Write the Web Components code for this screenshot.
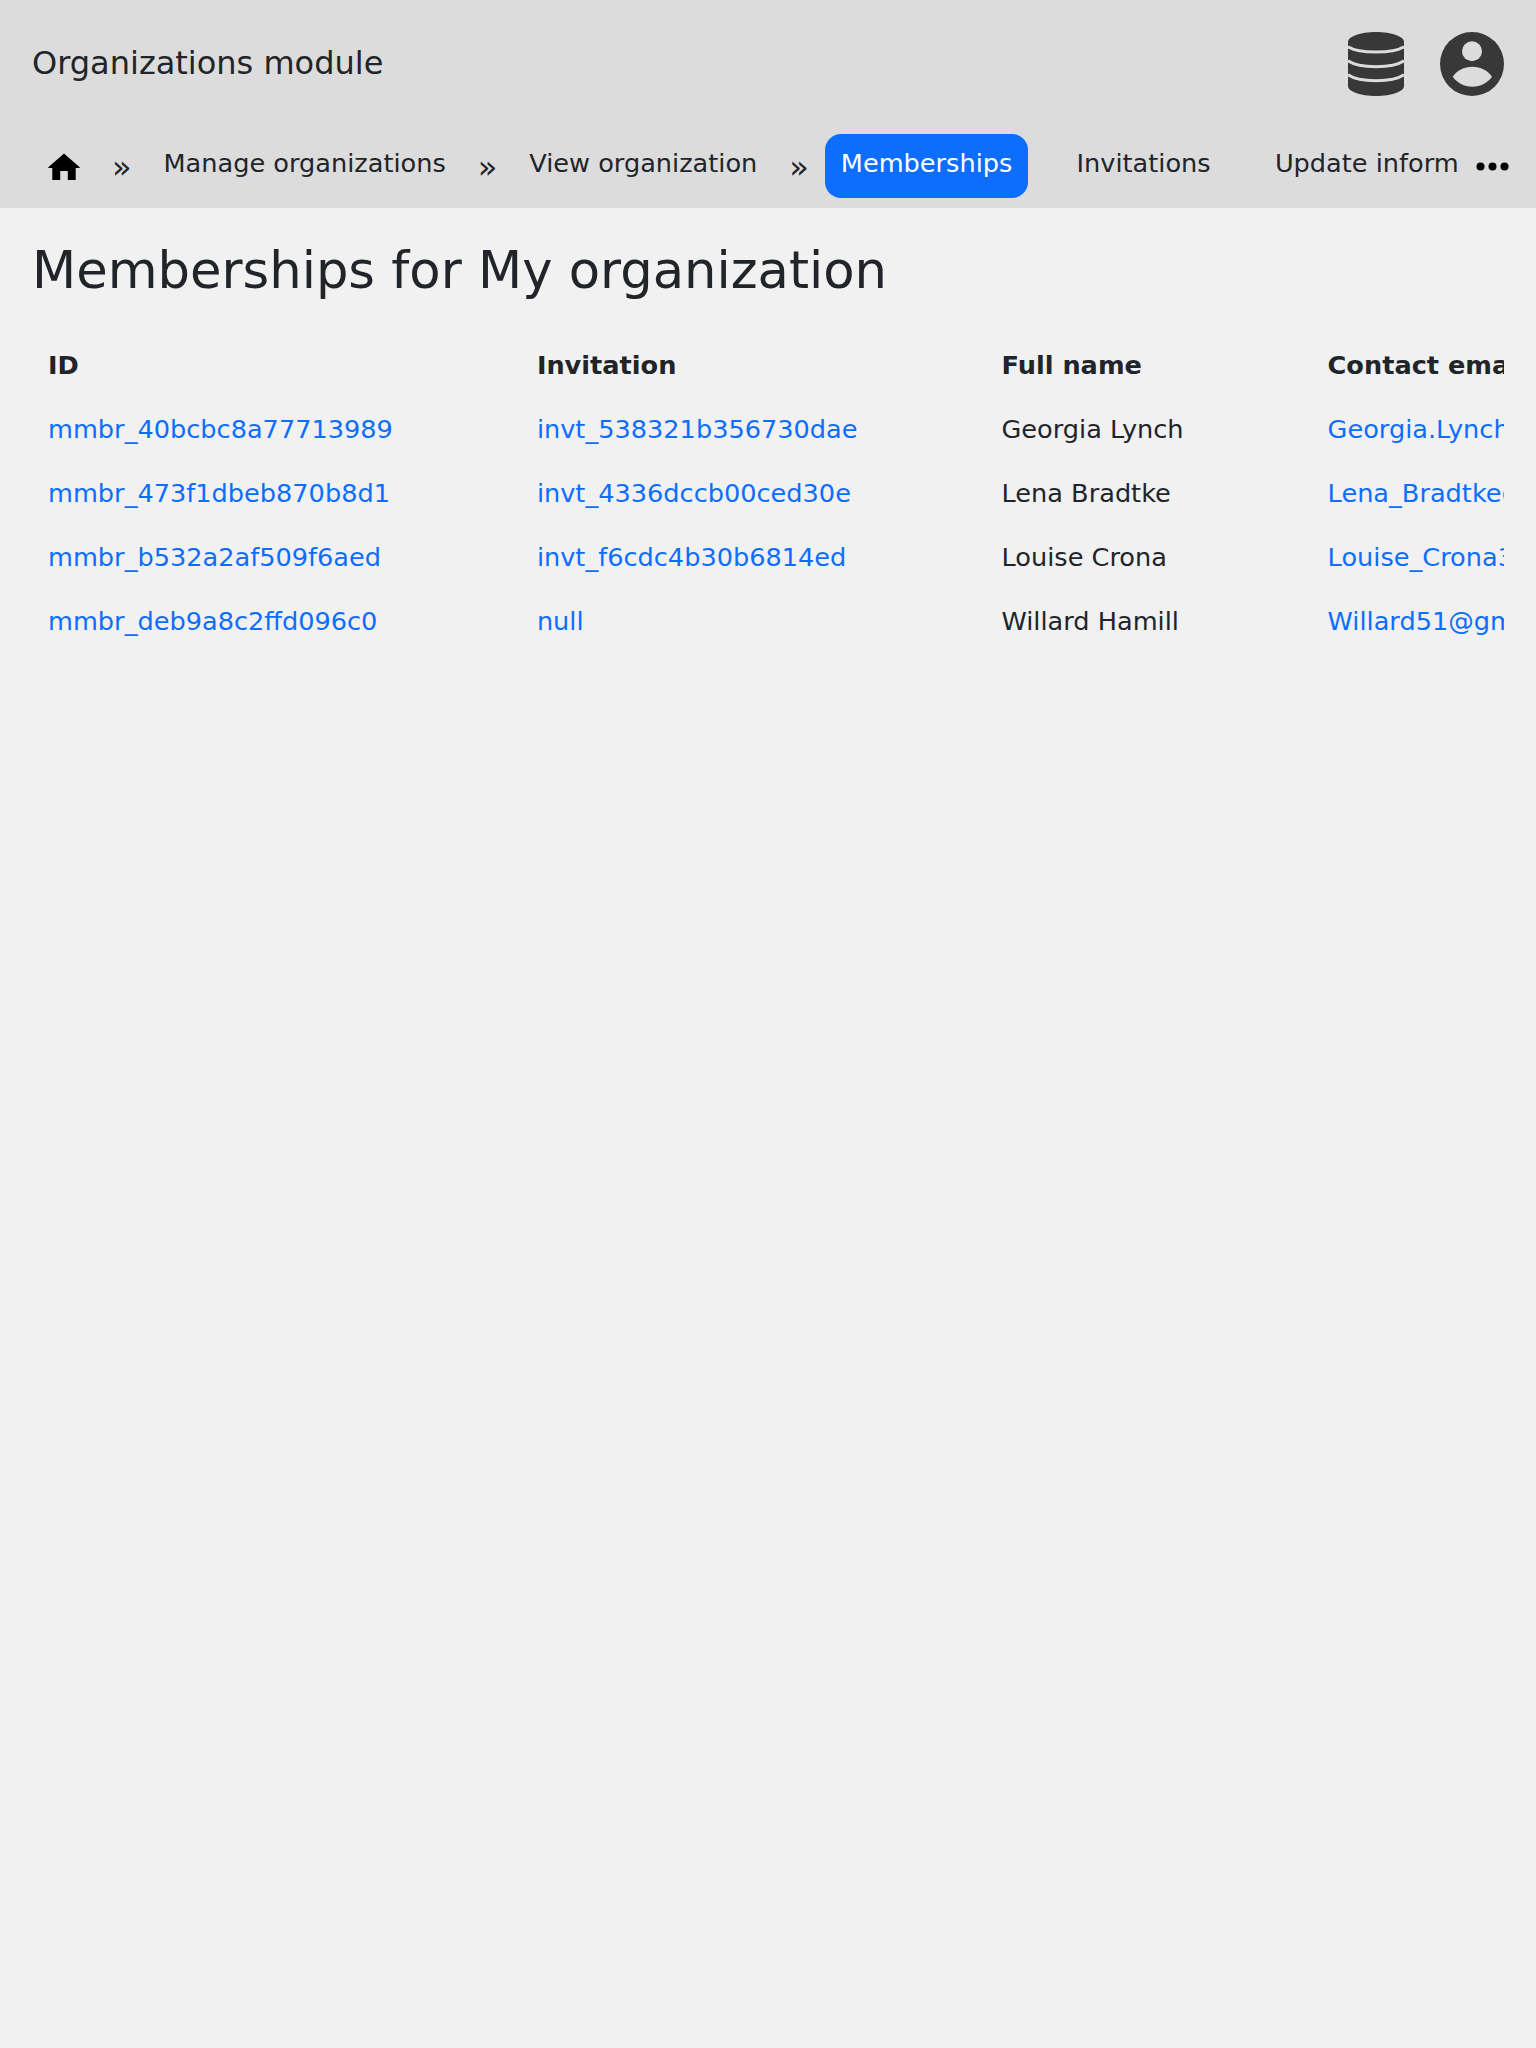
<!DOCTYPE html>
<html>
<head>
<meta charset="utf-8">
<title>Organizations module</title>
<style>
	html, body {
		margin: 0;
		min-height: 100%;
		background-color: #f1f1f1;
		font-family: "DejaVu Sans", sans-serif;
		font-size: 25.6px;
		color: #212529;
	}
</style>
</head>
<body>
<org-app>
	<org-topbar title-text="Organizations module"></org-topbar>
	<org-nav></org-nav>
	<org-page heading="Memberships for My organization"></org-page>
</org-app>

<script>
const linkColor = "#0d6efd";
const textColor = "#212529";
const headerColor = "#dcdcdc";

class orgApp extends HTMLElement {
	constructor() {
		super();
		this.attachShadow({mode: 'open'}).innerHTML = /*html*/`
			<style>
				:host {
					display: flex;
					flex-direction: column;
					min-height: 2048px;
				}
			</style>
			<slot></slot>
		`;
	}
}

class orgTopbar extends HTMLElement {
	constructor() {
		super();
		this.attachShadow({mode: 'open'}).innerHTML = /*html*/`
			<style>
				:host {
					display: flex;
					align-items: center;
					justify-content: space-between;
					height: 128px;
					padding: 0 32px;
					box-sizing: border-box;
					background-color: ${headerColor};
				}
				#title {
					margin-bottom: 2px;
					font-size: 32px;
					color: ${textColor};
				}
				#icons {
					display: flex;
					gap: 36px;
				}
				svg {
					display: block;
					height: 64px;
					fill: #383838;
				}
			</style>
			<span id="title"></span>
			<div id="icons">
				<svg width="56" viewBox="0 0 56 64">
					<path d="M0 10C0 4.500 12.500 0 28 0S56 4.500 56 10V54C56 59.500 43.500 64 28 64S0 59.500 0 54z"/>
					<g fill="none" stroke="${headerColor}" stroke-width="3">
						<path d="M0 14.700C5 18 15 20 28 20S51 18 56 14.700"/>
						<path d="M0 28.700C5 32.500 15 34.700 28 34.700S51 32.500 56 28.700"/>
						<path d="M0 42.700C5 46.500 15 48.700 28 48.700S51 46.500 56 42.700"/>
					</g>
				</svg>
				<svg width="64" viewBox="0 0 64 64">
					<circle cx="32" cy="32" r="32"/>
					<circle cx="32" cy="19.300" r="10" fill="${headerColor}"/>
					<path d="M12.700 44.700C17 38.500 24 34.700 32.300 34.700S47.700 38.500 52 44.700C47.700 50.700 40.500 54.700 32.300 54.700S17 50.700 12.700 44.700z" fill="${headerColor}"/>
				</svg>
			</div>
		`;
	}

	connectedCallback() {
		this.shadowRoot.querySelector('#title').textContent = this.getAttribute('title-text');
	}
}

class orgNav extends HTMLElement {
	constructor() {
		super();
		this.items = [
			{chevron: true, label: 'Manage organizations'},
			{chevron: true, label: 'View organization'},
			{chevron: true, label: 'Memberships', active: true},
			{label: 'Invitations'},
			{label: 'Update information'}
		];
		this.attachShadow({mode: 'open'}).innerHTML = /*html*/`
			<style>
				:host {
					display: flex;
					align-items: center;
					height: 80px;
					padding-left: 48px;
					padding-right: 27.500px;
					box-sizing: border-box;
					background-color: ${headerColor};
				}
				#links {
					display: flex;
					align-items: center;
					flex: 1;
					min-width: 0;
					height: 64px;
					margin-top: -4px;
					overflow: hidden;
					white-space: nowrap;
				}
				#home {
					flex: none;
					width: 32px;
					height: 27px;
					margin-right: 16px;
				}
				.chevron {
					flex: none;
					margin: 2px 16.600px 0 16.600px;
					font-size: 32px;
					line-height: 1;
					color: ${textColor};
				}
				#home + .chevron {
					margin-left: 16px;
				}
				.item {
					flex: none;
					height: 64px;
					line-height: 58px;
					padding: 0 15.360px;
					box-sizing: border-box;
					border-radius: 16px;
					color: ${textColor};
				}
				.item.active {
					background-color: ${linkColor};
					color: #fff;
				}
				.item + .item {
					margin-left: 33.500px;
				}
				#more {
					flex: none;
					display: block;
					margin-left: 17px;
					margin-top: -4px;
				}
			</style>
			<div id="links">
				<svg id="home" viewBox="0 0 32 27"><path d="M16 0.500L32 14.500L31 15H27.700V27H19.800V18H12.200V27H4.300V15H1L0 14.500z"/></svg>
			</div>
			<svg id="more" width="33" height="9" viewBox="0 0 33 9"><circle cx="4.500" cy="4.500" r="4"/><circle cx="16.500" cy="4.500" r="4"/><circle cx="28.500" cy="4.500" r="4"/></svg>
		`;
	}

	connectedCallback() {
		const links = this.shadowRoot.querySelector('#links');
		this.items.forEach(item => {
			if (item.chevron) {
				const chevron = document.createElement('span');
				chevron.setAttribute('class', 'chevron');
				chevron.textContent = '»';
				links.appendChild(chevron);
			}
			const link = document.createElement('span');
			link.setAttribute('class', item.active ? 'item active' : 'item');
			link.textContent = item.label;
			links.appendChild(link);
		});
	}
}

class orgPage extends HTMLElement {
	constructor() {
		super();
		this.rows = [
			['mmbr_40bcbc8a77713989', 'invt_538321b356730dae', 'Georgia Lynch', 'Georgia.Lynch@gmail.com'],
			['mmbr_473f1dbeb870b8d1', 'invt_4336dccb00ced30e', 'Lena Bradtke', 'Lena_Bradtke@hotmail.com'],
			['mmbr_b532a2af509f6aed', 'invt_f6cdc4b30b6814ed', 'Louise Crona', 'Louise_Crona33@yahoo.com'],
			['mmbr_deb9a8c2ffd096c0', 'null', 'Willard Hamill', 'Willard51@gmail.com']
		];
		this.attachShadow({mode: 'open'}).innerHTML = /*html*/`
			<style>
				:host {
					display: block;
					padding: 32px 32px 0;
					color: ${textColor};
				}
				h1 {
					margin: 0 0 32px;
					font-size: 51.200px;
					font-weight: 400;
					line-height: 1.2;
				}
				#scroller {
					overflow: hidden;
				}
				table {
					border-collapse: collapse;
					white-space: nowrap;
				}
				th, td {
					height: 64px;
					padding: 0 128px 0 16px;
					box-sizing: border-box;
					text-align: left;
				}
				th {
					font-weight: 700;
				}
				a {
					color: ${linkColor};
					text-decoration: none;
				}
			</style>
			<h1></h1>
			<div id="scroller">
				<table>
					<thead>
						<tr><th>ID</th><th>Invitation</th><th>Full name</th><th>Contact email</th></tr>
					</thead>
					<tbody></tbody>
				</table>
			</div>
		`;
	}

	connectedCallback() {
		this.shadowRoot.querySelector('h1').textContent = this.getAttribute('heading');
		const body = this.shadowRoot.querySelector('tbody');
		this.rows.forEach(row => {
			const tr = document.createElement('tr');
			row.forEach((value, i) => {
				const td = document.createElement('td');
				if (i === 2) {
					td.textContent = value;
				} else {
					const a = document.createElement('a');
					a.setAttribute('href', '#');
					a.textContent = value;
					td.appendChild(a);
				}
				tr.appendChild(td);
			});
			body.appendChild(tr);
		});
	}
}

customElements.define("org-app", orgApp);
customElements.define("org-topbar", orgTopbar);
customElements.define("org-nav", orgNav);
customElements.define("org-page", orgPage);
</script>
</body>
</html>
